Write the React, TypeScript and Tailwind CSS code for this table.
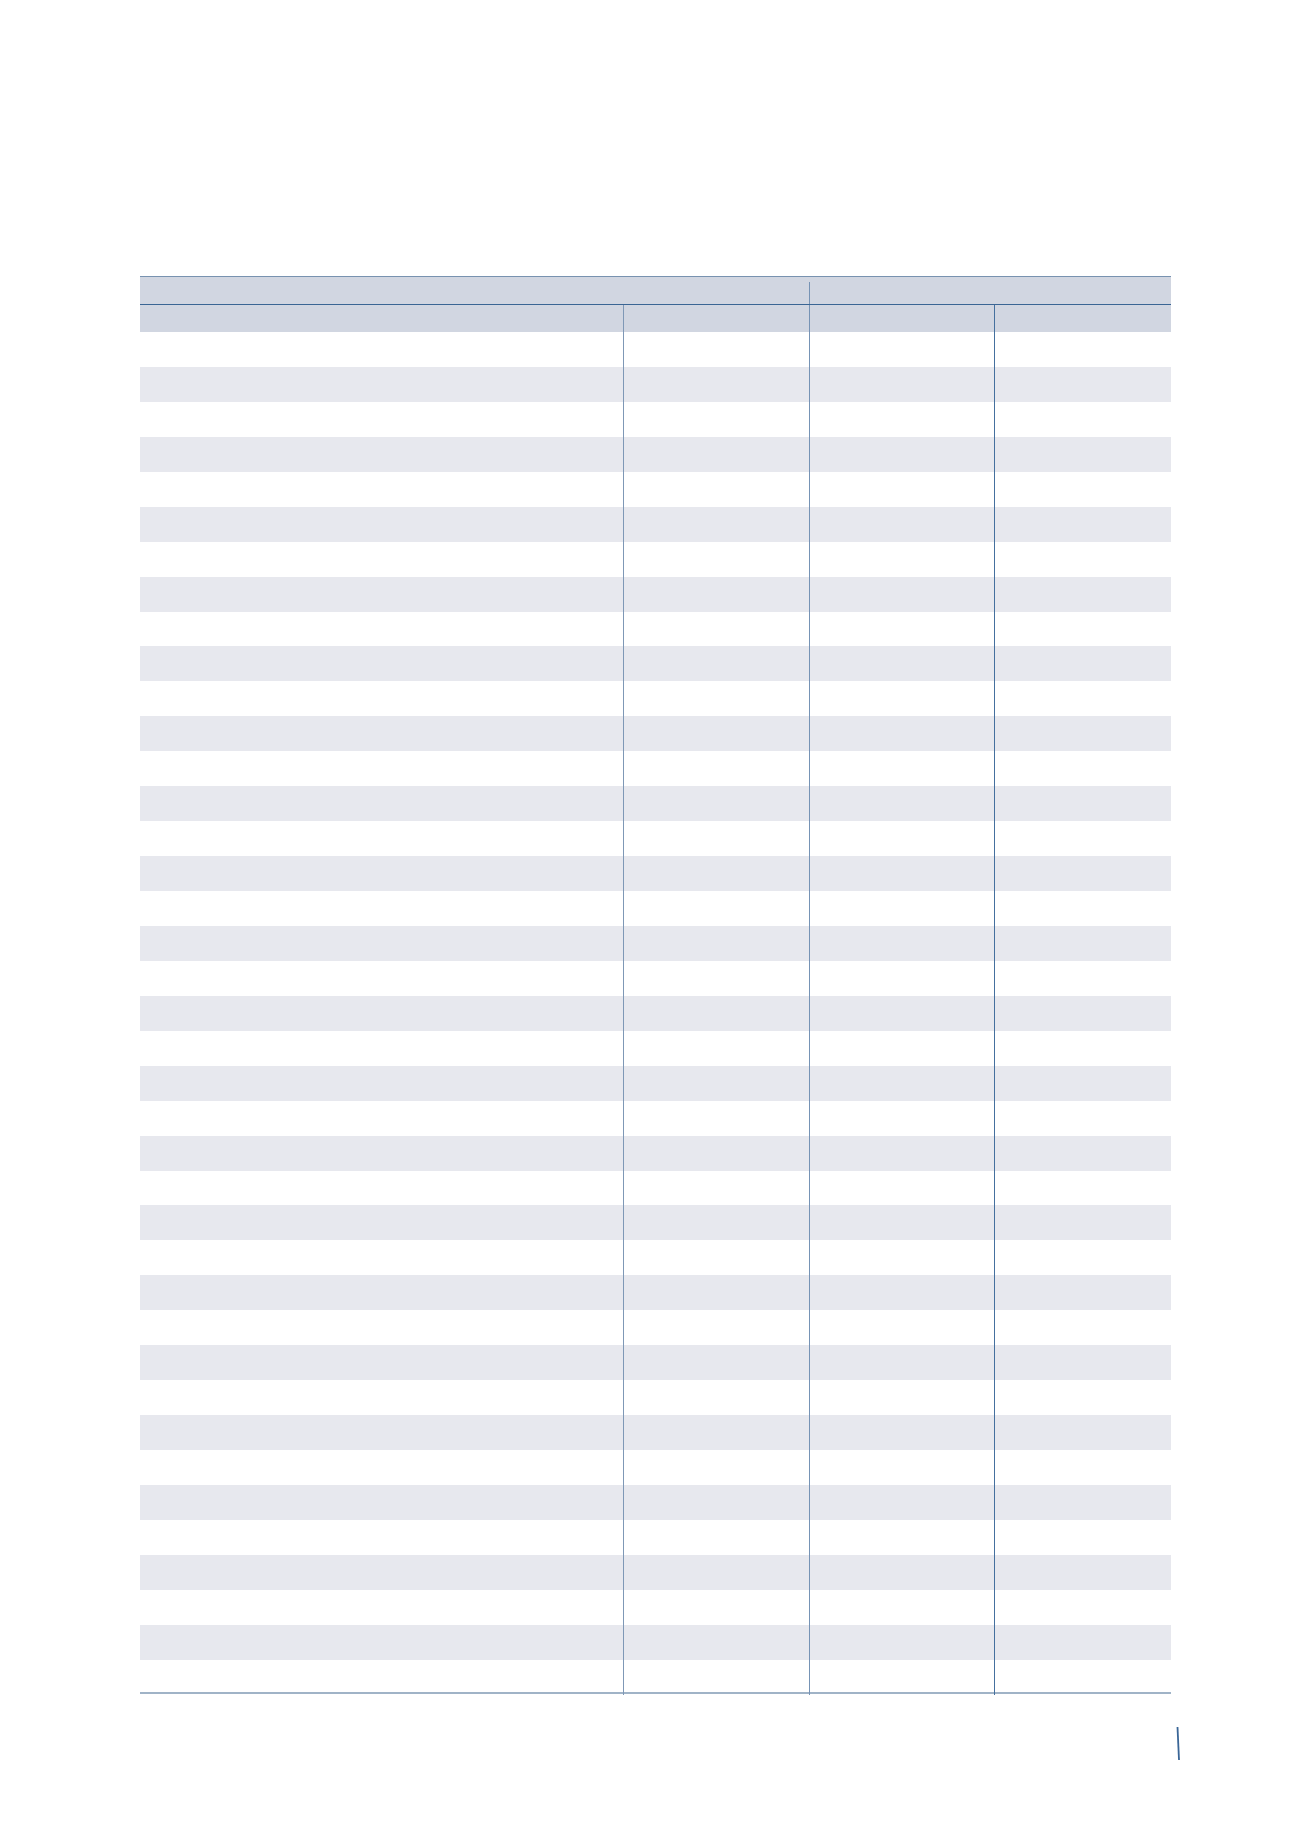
import React from "react";

const ROWS = 39;

export default function App() {
  const rows = Array.from({ length: ROWS }, (_, i) => i);
  return (
    <div className="min-h-[1839px] w-[1300px] bg-white pt-[276px] pl-[140px] font-['Liberation_Sans',sans-serif]">
      <div className="w-[1031px]">
        {/* top border */}
        <div className="h-px bg-[#7892b0]" />
        {/* header row 1 */}
        <div className="grid h-[27px] grid-cols-[669px_1px_361px] bg-[#d1d6e1]">
          <div />
          <div className="mt-[5px] bg-[#7693b5]" />
          <div />
        </div>
        <div className="h-px bg-[#3a6594]" />
        {/* header row 2 */}
        <div className="grid h-[27px] grid-cols-[483px_1px_185px_1px_184px_1px_176px] bg-[#d1d6e1]">
          <div />
          <div className="bg-[#7f98b6]" />
          <div />
          <div className="bg-[#7693b5]" />
          <div />
          <div className="bg-[#45709e]" />
          <div />
        </div>
        {/* body */}
        {rows.map((i) => (
          <div
            key={i}
            className={
              "grid h-[34.95px] grid-cols-[483px_1px_185px_1px_184px_1px_176px] " +
              (i % 2 === 1 ? "bg-[#e7e8ee]" : "bg-white")
            }
          >
            <div />
            <div className="bg-[#7f98b6]" />
            <div />
            <div className="bg-[#7693b5]" />
            <div />
            <div className="bg-[#45709e]" />
            <div />
          </div>
        ))}
        <div className="-mt-[3px] h-[2px] bg-[#a0b3c7]" />
      </div>
      <div className="mt-[32px] pl-[1036px]">
        <svg width="6" height="36" viewBox="0 0 6 36">
          <line x1="1.5" y1="1" x2="3" y2="34" stroke="#3a6697" strokeWidth="1.8" />
        </svg>
      </div>
    </div>
  );
}
